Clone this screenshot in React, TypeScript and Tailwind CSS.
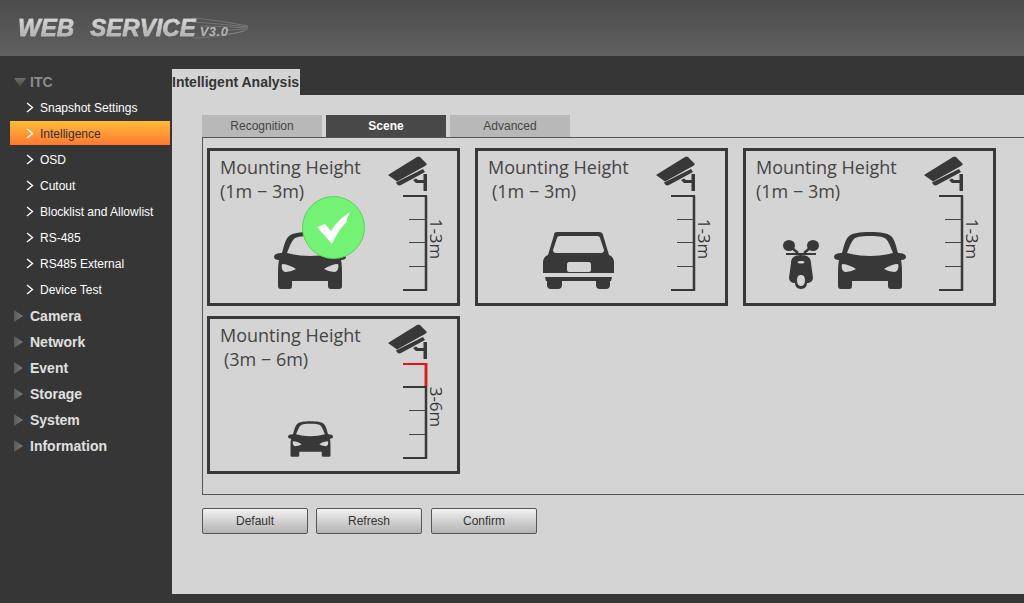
import { ReactNode } from 'react';

const SUB_ITEMS = [
  'Snapshot Settings',
  'Intelligence',
  'OSD',
  'Cutout',
  'Blocklist and Allowlist',
  'RS-485',
  'RS485 External',
  'Device Test',
];

const TOP_ITEMS = ['Camera', 'Network', 'Event', 'Storage', 'System', 'Information'];

function Chevron() {
  return (
    <svg width="8" height="11" viewBox="0 0 8 11" className="mr-[6px] shrink-0">
      <path d="M1 1 L6.5 5.5 L1 10" fill="none" stroke="#fff" strokeWidth="1.4" />
    </svg>
  );
}

function Sidebar() {
  return (
    <div className="w-[172px] shrink-0 pt-[13px] font-['Liberation_Sans',sans-serif]">
      <div className="h-[26px] flex items-center pl-[14px]">
        <svg width="12" height="9" viewBox="0 0 12 9" className="mr-[4px]">
          <defs>
            <linearGradient id="triDown" x1="0" y1="0" x2="0" y2="1">
              <stop offset="0" stopColor="#6e6e6e" />
              <stop offset="1" stopColor="#444444" />
            </linearGradient>
          </defs>
          <path d="M0 0 H12 L6 9 Z" fill="url(#triDown)" />
        </svg>
        <span className="text-sm font-bold text-[#8c8c8c]">ITC</span>
      </div>
      {SUB_ITEMS.map((item) => {
        const active = item === 'Intelligence';
        return (
          <div key={item} className="h-[26px] pb-[2px] pl-[10px] pr-[2px]">
            <div
              className={
                active
                  ? 'h-[24px] flex items-center pl-[16px] pt-[1px] text-xs text-[#333] bg-gradient-to-b from-[#ffbb38] to-[#ff7733]'
                  : 'h-[24px] flex items-center pl-[16px] pt-[1px] text-xs text-white'
              }
            >
              <Chevron />
              {item}
            </div>
          </div>
        );
      })}
      {TOP_ITEMS.map((item) => (
        <div key={item} className="h-[26px] flex items-center pl-[14px]">
          <svg width="9" height="12" viewBox="0 0 9 12" className="mr-[7px]">
            <defs>
              <linearGradient id="triRight" x1="0" y1="0" x2="1" y2="0">
                <stop offset="0" stopColor="#5a5a5a" />
                <stop offset="1" stopColor="#7a7a7a" />
              </linearGradient>
            </defs>
            <path d="M0 0 L9 6 L0 12 Z" fill="url(#triRight)" />
          </svg>
          <span className="text-sm font-bold text-[#e0e0e0]">{item}</span>
        </div>
      ))}
    </div>
  );
}

function CarFront({ width, height }: { width: number; height: number }) {
  return (
    <svg width={width} height={height} viewBox="0 0 72 57" className="block">
      <path
        fillRule="evenodd"
        fill="#383838"
        d="M36 0 C25 0 19 1 15 4 C11 8 10 14 8 21 C4 21 0 22 0 25 C0 27 2 28 5 28 C4 32 4 38 4 46 V54 C4 56 5 57 7 57 H15 C17 57 18 56 18 54 V49 H54 V54 C54 56 55 57 57 57 H65 C67 57 68 56 68 54 V46 C68 38 68 32 67 28 C70 28 72 27 72 25 C72 22 68 21 64 21 C62 14 61 8 57 4 C53 1 47 0 36 0 Z
        M36 4 C46 4 50 5 52 7 C55 10 57 16 59 21 C52 23 44 24 36 24 C28 24 20 23 13 21 C15 16 17 10 20 7 C22 5 26 4 36 4 Z
        M8 32 C12 32 18 34 22 37 C19 39 14 40 11 40 C8 39 7 35 8 32 Z
        M64 32 C60 32 54 34 50 37 C53 39 58 40 61 40 C64 39 65 35 64 32 Z"
      />
    </svg>
  );
}

function CarRear() {
  return (
    <svg width="71" height="58" viewBox="0 0 71 58" className="block">
      <path
        fillRule="evenodd"
        fill="#383838"
        d="M14 1 H56 C58 1 60 2 60 4 L66 24 C69 25 71 28 71 31 V42 H0 V31 C0 28 2 25 5 24 L11 4 C11 2 12 1 14 1 Z
        M17 5 C15 5 14 6 14 7 L10 19 C10 21 11 22 13 22 H58 C60 22 61 21 61 19 L57 7 C57 6 56 5 54 5 Z
        M26 31 C25 31 24 32 24 33 V39 C24 40 25 41 26 41 H46 C47 41 48 40 48 39 V33 C48 32 47 31 46 31 Z"
      />
      <path d="M2 46 H69 L68 50 H67 V54 C67 56 66 58 63 58 H57 C54 58 53 56 53 54 V50 H19 V54 C19 56 18 58 15 58 H8 C5 58 4 56 4 54 V50 H3 Z" fill="#383838" />
    </svg>
  );
}

function Scooter() {
  return (
    <svg width="36" height="49" viewBox="0 0 36 49" className="block">
      <ellipse cx="6" cy="5.5" rx="6" ry="5.5" fill="#383838" />
      <ellipse cx="30" cy="5.5" rx="6" ry="5.5" fill="#383838" />
      <path d="M9 8 L15 13 M27 8 L21 13" stroke="#383838" strokeWidth="2.5" />
      <path d="M3 14 H33" stroke="#383838" strokeWidth="2" />
      <path
        fillRule="evenodd"
        fill="#383838"
        d="M18 15 C25 15 28 18 28 23 L30 38 C30 41 27 43 24 43 C24 46 22 49 18 49 C14 49 12 46 12 43 C9 43 6 41 6 38 L8 23 C8 18 11 15 18 15 Z
        M14.5 22 C14.5 20.5 21.5 20.5 21.5 22 C21.5 24 14.5 24 14.5 22 Z
        M18 35 C15 35 14 37 14 41 C14 44 16 46 18 46 C20 46 22 44 22 41 C22 37 21 35 18 35 Z"
      />
    </svg>
  );
}

function CameraRuler({ label, red }: { label: string; red?: boolean }) {
  return (
    <svg width="64" height="142" viewBox="0 0 64 142" className="block">
      {/* camera */}
      <path d="M3 23 L32 5 C33 4.5 34.5 4.5 35 5 L41 11 C42 12 42 13 40 14 L12 29.5 Z" fill="#383838" />
      <path d="M11 30.5 L38 17 L40 20 L16 33 C14 34 12 33 11 30.5 Z" fill="#383838" />
      <path d="M38.5 22 H42 V39 H38.5 V31 H31 L28 28 L31 26.5 L33 28 H38.5 Z" fill="#383838" />
      {/* ruler */}
      <path d="M41 43.5 V139" stroke="#383838" strokeWidth="2.5" fill="none" />
      <path d="M18 44 H42 M18 138 H42" stroke="#383838" strokeWidth="2" fill="none" />
      <path d="M24 67.5 H41 M24 90.5 H41 M24 114.5 H41" stroke="#444" strokeWidth="1" fill="none" />
      {red && (
        <>
          <path d="M18 43 H42.2 V67 H39.8 V45 H18 Z" fill="#ee1111" />
          <path d="M18 67 H42" stroke="#383838" strokeWidth="2" />
        </>
      )}
      <text
        transform="translate(45 87) rotate(90)"
        textAnchor="middle"
        fontSize="17"
        fill="#383838"
        className="font-['Open_Sans',sans-serif]"
      >
        {label}
      </text>
    </svg>
  );
}

function SceneCard({
  range,
  label,
  indent,
  red,
  selected,
  children,
}: {
  range: string;
  label: string;
  indent?: boolean;
  red?: boolean;
  selected?: boolean;
  children: ReactNode;
}) {
  return (
    <div className="relative h-[158px] border-[3px] border-[#383838] flex justify-between pr-[8px]">
      <div className="flex flex-col justify-between pb-[14px]">
        <div className="pl-[10px] pt-[4px] text-[18px] leading-[24px] text-[#444] font-['Open_Sans',sans-serif]">
          <div>Mounting Height</div>
          <div className={indent ? 'pl-[4px]' : ''}>{range}</div>
        </div>
        {children}
      </div>
      <div className="pt-[1px]">
        <CameraRuler label={label} red={red} />
      </div>
      {selected && (
        <div className="absolute left-[92px] top-[45px] w-[63px] h-[63px] rounded-full bg-[#74f276] border border-[#5fd060] flex items-center justify-center">
          <svg width="34" height="32" viewBox="0 0 34 32">
            <path d="M0 15 L8 12 L14 19 C19 11 25 5 33 0 C31 5 29 8 30 10 C24 15 19 23 15 32 Z" fill="#fff" />
          </svg>
        </div>
      )}
    </div>
  );
}

function ActionButton({ text }: { text: string }) {
  return (
    <button className="w-[106px] h-[26px] rounded-[2px] border border-[#555] bg-gradient-to-b from-[#f2f2f2] to-[#b4b2b2] text-xs text-[#333]">
      {text}
    </button>
  );
}

export default function App() {
  return (
    <div className="w-[1024px] h-[603px] overflow-hidden bg-[#363636] flex flex-col font-['Liberation_Sans',sans-serif]">
      {/* Header */}
      <div className="h-[56px] shrink-0 bg-gradient-to-b from-[#4c4c4c] to-[#606060] flex items-center pl-[18px] relative">
        <svg width="60" height="26" viewBox="0 0 60 26" className="absolute left-[190px] top-[15px]">
          <path
            d="M2 3 C20 4 40 8 58 11 M2 7 C20 8 40 10 58 12 M10 11 C25 11 40 12 58 13 M38 15 C45 15 52 14 58 14 M38 19 C45 18 52 17 56 15 M4 23 C25 22 45 19 54 16"
            stroke="#8a8a8a"
            strokeWidth="0.6"
            fill="none"
          />
        </svg>
        <span className="relative text-[24px] font-bold italic whitespace-pre [word-spacing:1.5px] text-transparent bg-clip-text bg-gradient-to-b from-[#ececec] to-[#9c9c9c] [-webkit-text-stroke:0.5px_#c4c4c4]">
          WEB  SERVICE
        </span>
        <span className="relative mt-[8px] ml-[4px] text-[13px] font-bold italic tracking-[0.5px] text-[#b4b4b4]">V3.0</span>
      </div>

      <div className="flex flex-1 min-h-0">
        <Sidebar />

        {/* Main */}
        <div className="flex-1 min-w-0 pt-[13px] pb-[9px] flex flex-col">
          <div className="w-[128px] h-[26px] shrink-0 bg-[#d4d4d4] flex items-center text-sm font-bold text-[#333] whitespace-nowrap">
            Intelligent Analysis
          </div>
          <div className="flex-1 bg-[#d4d4d4] pt-[20px] pl-[30px]">
            <div className="flex gap-[4px]">
              <div className="w-[120px] h-[22px] flex items-center justify-center bg-[#b8b8b8] text-xs text-[#444]">Recognition</div>
              <div className="w-[120px] h-[22px] flex items-center justify-center bg-[#484848] text-xs font-bold text-white">Scene</div>
              <div className="w-[120px] h-[22px] flex items-center justify-center bg-[#b8b8b8] text-xs text-[#444]">Advanced</div>
            </div>
            <div className="h-[358px] border border-r-0 border-[#555] pt-[10px] pl-[4px]">
              <div className="grid grid-cols-[253px_253px_253px] gap-x-[15px] gap-y-[10px]">
                <SceneCard range="(1m − 3m)" label="1-3m" selected>
                  <div className="ml-[64px]">
                    <CarFront width={72} height={57} />
                  </div>
                </SceneCard>
                <SceneCard range="(1m − 3m)" label="1-3m" indent>
                  <div className="ml-[65px]">
                    <CarRear />
                  </div>
                </SceneCard>
                <SceneCard range="(1m − 3m)" label="1-3m">
                  <div className="ml-[37px] flex items-end gap-[15px]">
                    <Scooter />
                    <CarFront width={72} height={57} />
                  </div>
                </SceneCard>
                <SceneCard range="(3m − 6m)" label="3-6m" indent red>
                  <div className="ml-[78px]">
                    <CarFront width={45} height={36} />
                  </div>
                </SceneCard>
              </div>
            </div>
            <div className="flex gap-[8px] mt-[13px]">
              <ActionButton text="Default" />
              <ActionButton text="Refresh" />
              <div className="ml-[1px]">
                <ActionButton text="Confirm" />
              </div>
            </div>
          </div>
        </div>
      </div>
    </div>
  );
}
